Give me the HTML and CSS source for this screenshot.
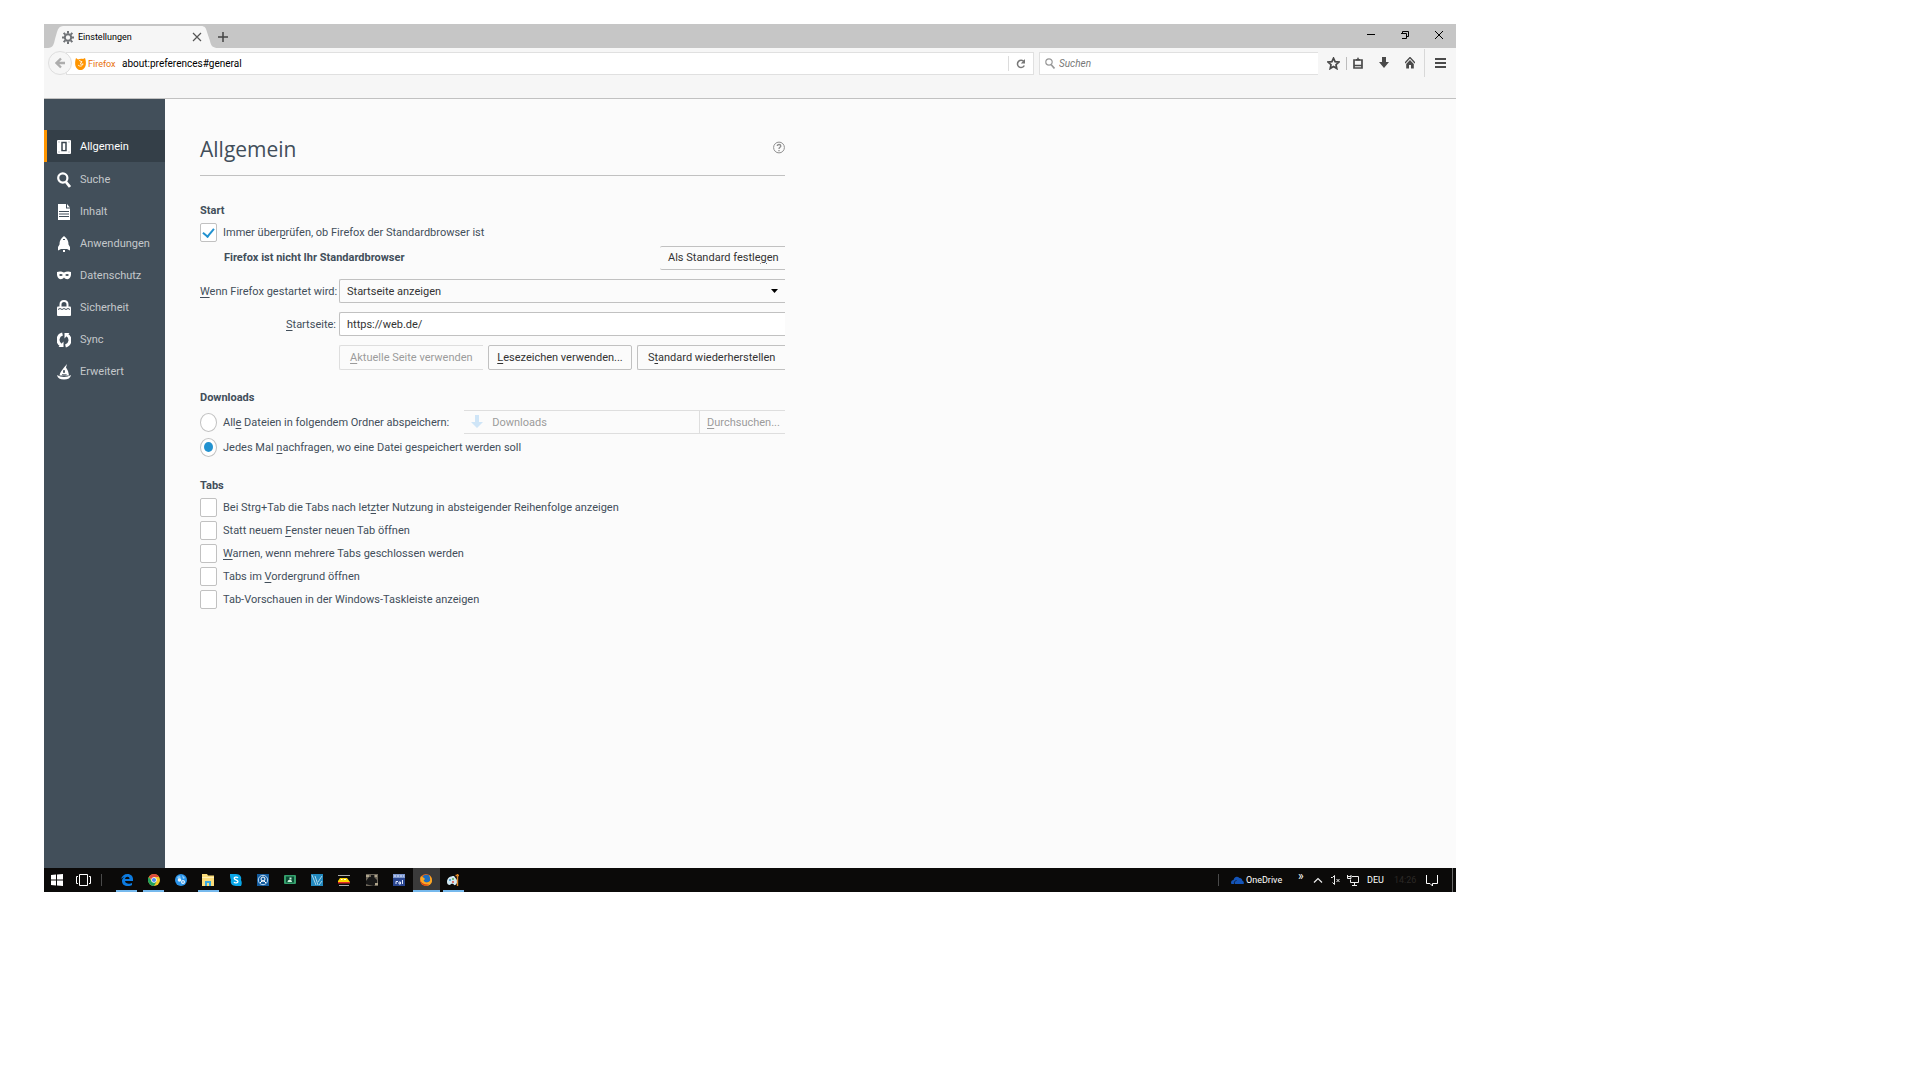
FILE: index.html
```html
<!DOCTYPE html>
<html lang="de">
<head>
<meta charset="utf-8">
<title>Einstellungen</title>
<link rel="stylesheet" href="styles.css">
</head>
<body>
<div class="screen">
  <header class="titlebar">
    <div class="tab">
      <svg class="tab-shape" viewBox="0 0 170 22" preserveAspectRatio="none" aria-hidden="true"><path d="M0 22C5 22 6 18 7 13L9 6C10 2 12 0 15 0H153C157 0 158 2 159 6L162 15C163 20 165 22 170 22Z" fill="#f6f6f6"/></svg>
      <svg class="tab-icon" viewBox="0 0 12 13" aria-hidden="true"><g fill="none" stroke="#6f7276"><circle cx="6" cy="6.500" r="3.200" stroke-width="2"/><path d="M6 0v2.500M6 10.500V13M0 6.500h2M10 6.500h2M1.700 1.900l1.600 1.700M8.700 9.400l1.600 1.700M10.300 1.900L8.700 3.600M3.300 9.400l-1.600 1.700" stroke-width="2"/></g></svg>
      <span class="tab-title">Einstellungen</span>
      <button class="icon-btn" aria-label="Tab schließen"><svg width="10" height="10" viewBox="0 0 10 10"><path d="M1 1l8 8M9 1l-8 8" stroke="#555" stroke-width="1.200"/></svg></button>
    </div>
    <button class="icon-btn" aria-label="Neuer Tab"><svg width="10" height="10" viewBox="0 0 10 10"><path d="M5 0v10M0 5h10" stroke="#444" stroke-width="1.500"/></svg></button>
    <div class="window-controls">
      <button class="icon-btn" aria-label="Minimieren"><svg width="8" height="10" viewBox="0 0 8 10"><path d="M0 4.500h8" stroke="#000"/></svg></button>
      <button class="icon-btn" aria-label="Verkleinern"><svg width="8" height="10" viewBox="0 0 8 10"><path d="M1.500 3V1.500h6v5H6M0 3.500h5.500v5H1" fill="none" stroke="#000"/></svg></button>
      <button class="icon-btn" aria-label="Schließen"><svg width="8" height="10" viewBox="0 0 8 10"><path d="M0 1l8 8M8 1L0 9" stroke="#000"/></svg></button>
    </div>
  </header>

  <div class="navbar">
    <button class="back" aria-label="Zurück"><svg width="10" height="12" viewBox="0 0 10 12"><path d="M10 6H2M6 1.500L1.500 6 6 10.500" fill="none" stroke="#adadad" stroke-width="2.300"/></svg></button>
    <div class="urlbar">
      <svg width="11" height="12" viewBox="0 0 11 12" aria-hidden="true"><path d="M1 0l2 1.500C5 .5 7 .5 8 1l2-1c1 3 1 5 .8 6.500C10.400 10 8 12 5.500 12S.5 10 .2 6.500C0 4 .3 2 1 0z" fill="#ff9500"/><path d="M4 2.500c1 0 1.500 1 3 1.200C6.500 4.800 6 5 5 5.500c1 1 2.300 1 3 .2-.4 2.400-3 3.300-5 1.300" fill="none" stroke="#fff" stroke-width=".9"/></svg>
      <span class="identity">Firefox</span>
      <input class="url-input" type="text" value="about:preferences#general" aria-label="Adresse">
      <button class="reload" aria-label="Neu laden"><svg width="10" height="10" viewBox="0 0 10 10"><path d="M8 2.800A3.600 3.600 0 1 0 8.300 6.500" fill="none" stroke="#777" stroke-width="1.500"/><path d="M9 0v4.500H4.800z" fill="#777"/></svg></button>
    </div>
    <div class="searchbar">
      <svg width="10" height="11" viewBox="0 0 10 11" aria-hidden="true"><circle cx="4" cy="4" r="3.200" fill="none" stroke="#999" stroke-width="1.200"/><path d="M6 6.500l3.500 4" stroke="#999" stroke-width="1.700"/></svg>
      <input class="search-input" type="text" placeholder="Suchen" aria-label="Suchen">
    </div>
    <div class="tools">
      <button class="icon-btn" aria-label="Lesezeichen"><svg width="13" height="13" viewBox="0 0 13 13"><path d="M6.500 1.200l1.600 3.500 3.800.4L9 7.700l.8 3.900-3.300-2-3.300 2 .8-3.900L1.100 5.100l3.800-.4z" fill="none" stroke="#4a4a4a" stroke-width="1.700"/></svg></button>
      <span class="tool-sep"></span>
      <button class="icon-btn" aria-label="Lesezeichenliste"><svg width="10" height="12" viewBox="0 0 10 12"><path d="M1 3h8v8H1zM1 8.500h8" fill="none" stroke="#4a4a4a" stroke-width="1.700"/><path d="M3 2h1l1-2 1 2h1v1.500H3z" fill="#4a4a4a"/></svg></button>
      <button class="icon-btn" aria-label="Downloads"><svg width="10" height="12" viewBox="0 0 10 12"><path d="M3 0h4v5h3L5 11 0 5h3z" fill="#4a4a4a"/></svg></button>
      <button class="icon-btn" aria-label="Startseite"><svg width="10" height="12" viewBox="0 0 10 12"><path d="M0 6l5-5.500L10 6" fill="none" stroke="#4a4a4a" stroke-width="1.300"/><path d="M5 3L1.200 7v4.500H4V8h2v3.500h2.800V7z" fill="#4a4a4a"/></svg></button>
      <button class="icon-btn menu-btn" aria-label="Menü"><svg width="11" height="10" viewBox="0 0 11 10"><path d="M0 1h11M0 5h11M0 9h11" stroke="#4a4a4a" stroke-width="2"/></svg></button>
    </div>
  </div>

  <div class="page">
    <nav class="categories">
      <a class="category selected" href="#general"><svg viewBox="0 0 14 16" aria-hidden="true"><rect y="1" width="14" height="14" rx="1" fill="#fff"/><path d="M5 3.500h4v8H5z" fill="none" stroke="#3b464f" stroke-width="1.500"/><path d="M6 9h2v2H6z" fill="#fff"/><path d="M1.500 2.500h1v1h-1zM11.500 2.500h1v1h-1zM1.500 12.500h1v1h-1zM11.500 12.500h1v1h-1z" fill="#8b949a"/></svg>Allgemein</a>
      <a class="category" href="#search"><svg viewBox="0 0 14 16" aria-hidden="true"><circle cx="5.800" cy="6" r="4.600" fill="none" stroke="#fff" stroke-width="2.200"/><path d="M9 10l4 5" stroke="#fff" stroke-width="2.800"/></svg>Suche</a>
      <a class="category" href="#content"><svg viewBox="0 0 14 16" aria-hidden="true"><path d="M1 0h8v4.500h4V16H1z" fill="#fff"/><path d="M10 0l3 3.500h-3z" fill="#fff"/><path d="M2 7.500h10M2 10h10M2 12.500h10" stroke="#424f5a"/></svg>Inhalt</a>
      <a class="category" href="#applications"><svg viewBox="0 0 14 16" aria-hidden="true"><path d="M7 0c3.500 2.500 4.500 5 4.500 8.500L13 11v3.500l-3-1.500H4l-3 1.500V11l1.500-2.500C2.500 5 3.500 2.500 7 0z" fill="#fff"/><path d="M6 14h2v2H6z" fill="#fff"/><path d="M6 3.500h2" stroke="#424f5a"/></svg>Anwendungen</a>
      <a class="category" href="#privacy"><svg viewBox="0 0 14 16" aria-hidden="true"><path d="M0 4c2-1 5-.8 7 .6C9 3.200 12 3 14 4v3c-1 5-5 5-7 2.500C5 12 1 12 0 7z" fill="#fff"/><path d="M2 7c1-1.500 3-1.300 3.800 0-.8 1.400-2.800 1.500-3.800 0zM8.200 7C9 5.700 11 5.500 12 7c-1 1.500-3 1.400-3.800 0z" fill="#424f5a"/></svg>Datenschutz</a>
      <a class="category" href="#security"><svg viewBox="0 0 14 16" aria-hidden="true"><path d="M3.500 8V4.500C3.500 2.500 5 1 7 1s3.500 1.500 3.500 3.500V8" fill="none" stroke="#fff" stroke-width="2"/><rect x="0" y="6.500" width="14" height="9.500" rx="1" fill="#fff"/><path d="M1 9.500l2-1 2 1 2-1 2 1 2-1 2 1" fill="none" stroke="#424f5a"/></svg>Sicherheit</a>
      <a class="category" href="#sync"><svg viewBox="0 0 14 16" aria-hidden="true"><path d="M5.500 2A6 6 0 0 0 4 13M8.500 14A6 6 0 0 0 10 3" fill="none" stroke="#fff" stroke-width="3"/><path d="M1.500 15h5V9.500zM12.500 1h-5v5.500z" fill="#fff"/></svg>Sync</a>
      <a class="category" href="#advanced"><svg viewBox="0 0 14 16" aria-hidden="true"><path d="M10 0L9 3.500c2 2.500 2.500 5 3 8H2.500c.5-3 2.500-5.500 4.500-8z" fill="#fff"/><path d="M0 11c4 2.500 10 2.500 14 0-.5 3-3 4.500-7 4.500S.5 14 0 11z" fill="#fff"/><path d="M5 10.500c1.500.8 3 .8 4.500 0M6.500 6.500h1v2h-1z" stroke="#424f5a" fill="#424f5a" stroke-width=".8"/></svg>Erweitert</a>
    </nav>

    <main class="content">
      <div class="pane-head">
        <h1>Allgemein</h1>
        <button class="icon-btn" aria-label="Hilfe"><svg width="12" height="13" viewBox="0 0 12 13"><circle cx="6" cy="6.500" r="5.400" fill="none" stroke="#8e8e8e"/><path d="M4.300 5C4.300 3 7.800 3 7.800 5 7.800 6.300 6 6.200 6 8M6 9v1.300" fill="none" stroke="#8e8e8e" stroke-width="1.300"/></svg></button>
      </div>

      <section class="group">
        <h2>Start</h2>
        <label class="option check-default"><input type="checkbox" checked><span>Immer über<u>p</u>rüfen, ob Firefox der Standardbrowser ist</span></label>
        <div class="default-row"><strong>Firefox ist nicht Ihr Standardbrowser</strong><button class="btn open-left">Als Standard festle<u>g</u>en</button></div>
        <div class="form">
          <label for="startup"><u>W</u>enn Firefox gestartet wird:</label>
          <div class="select-wrap">
            <select id="startup"><option>Startseite anzeigen</option></select>
            <svg class="caret" viewBox="0 0 7 4" aria-hidden="true"><path d="M0 0h7L3.500 4z" fill="#000"/></svg>
          </div>
          <label for="home"><u>S</u>tartseite:</label>
          <input class="text" id="home" type="text" value="https://web.de/">
          <div class="home-buttons">
            <button class="btn closed" disabled><u>A</u>ktuelle Seite verwenden</button>
            <button class="btn closed mid"><u>L</u>esezeichen verwenden...</button>
            <button class="btn wide">S<u>t</u>andard wiederherstellen</button>
          </div>
        </div>
      </section>

      <section class="group downloads">
        <h2>Downloads</h2>
        <div class="folder-row">
          <label class="option"><input type="radio" name="dl"><span>All<u>e</u> Dateien in folgendem Ordner abspeichern:</span></label>
          <div class="folder">
            <svg width="12" height="14" viewBox="0 0 12 14" aria-hidden="true"><path d="M4 0h4v7h4l-6 6-6-6h4z" fill="#cfe5f7"/></svg>
            <input type="text" value="Downloads" aria-label="Ordner" disabled>
          </div>
          <button class="btn browse" disabled><u>D</u>urchsuchen...</button>
        </div>
        <label class="option ask"><input type="radio" name="dl" checked><span>Jedes Mal <u>n</u>achfragen, wo eine Datei gespeichert werden soll</span></label>
      </section>

      <section class="group tabs">
        <h2>Tabs</h2>
        <label class="option"><input type="checkbox"><span>Bei Strg+Tab die Tabs nach let<u>z</u>ter Nutzung in absteigender Reihenfolge anzeigen</span></label>
        <label class="option"><input type="checkbox"><span>Statt neuem <u>F</u>enster neuen Tab öffnen</span></label>
        <label class="option"><input type="checkbox"><span><u>W</u>arnen, wenn mehrere Tabs geschlossen werden</span></label>
        <label class="option"><input type="checkbox"><span>Tabs im <u>V</u>ordergrund öffnen</span></label>
        <label class="option"><input type="checkbox"><span>Tab-Vorschauen in der Windows-Taskleiste anzeigen</span></label>
      </section>
    </main>
  </div>

  <footer class="taskbar">
    <button class="icon-btn" aria-label="Start"><svg width="12" height="12" viewBox="0 0 12 12"><path d="M0 1l5-.5v5H0zM6 .4L12 0v5.500H6zM0 6.500h5v5L0 11zM6 6.500h6V12l-6-.4z" fill="#fff"/></svg></button>
    <button class="icon-btn task-view" aria-label="Taskansicht"><svg width="15" height="12" viewBox="0 0 15 12"><path d="M3.500.5h8v11h-8zM2 2.500H.5v7H2M13 2.500h1.500v7H13" fill="none" stroke="#fff"/></svg></button>
    <span class="bar-sep"></span>
    <div class="apps">
      <button class="app running" aria-label="Edge"><svg viewBox="0 0 12 12"><path d="M0 5C1 2 3 0 6.500 0 10 0 12 2.500 12 5v2H4c.2 2 2 2.700 4 2.700 1.300 0 2.300-.3 3-.8V11c-1 .7-2.300 1-4 1-4 0-6-2-6-5 0-2 1-3.300 2.500-4C2.500 3 1 4 0 5zm4 0h4.500c0-1.500-.8-2.300-2-2.300S4.300 3.500 4 5z" fill="#0c7be0"/></svg></button>
      <button class="app running" aria-label="Chrome"><svg viewBox="0 0 12 12"><circle cx="6" cy="6" r="6" fill="#f5c928"/><path d="M.8 3A6 6 0 0 1 11.200 3H6L4 6z" fill="#dd4b3e"/><path d="M.8 3A6 6 0 0 0 6 12l2.500-4.500L4 7.500z" fill="#1fa15d"/><circle cx="6" cy="6" r="2.700" fill="#fff"/><circle cx="6" cy="6" r="2.100" fill="#4a8af4"/></svg></button>
      <button class="app" aria-label="Browser"><svg viewBox="0 0 12 12"><circle cx="6" cy="6" r="6" fill="#2a94ea"/><path d="M2 3l3-1.500 1 3L3 5z" fill="#7cc5fa"/><circle cx="4.500" cy="6" r="1.800" fill="#e8f5ff"/><circle cx="8" cy="8" r="2" fill="#e8f5ff"/><circle cx="8" cy="8" r=".8" fill="#1d78cc"/><path d="M7 1l3 3-2 1z" fill="#8fd0ff"/></svg></button>
      <button class="app running" aria-label="Explorer"><svg viewBox="0 0 12 12"><path d="M0 0h5l1 1.500h6V12H0z" fill="#fbdc7a"/><path d="M0 3h12v1H0z" fill="#fff0b8"/><path d="M3 12V7h6v5H7V9H5v3z" fill="#37a8e0"/></svg></button>
      <button class="app" aria-label="Skype"><svg viewBox="0 0 12 12"><path d="M0 0h6c4 0 6 3 5 6 1 2 1 4 0 6H6C2 12 0 9 1 6 0 4 0 2 0 0z" fill="#08a5e6"/><path d="M8 4C7 2.500 4 3 4.300 4.500 4.600 6 8 5.800 8 7.700 7.800 9.300 4.700 9.300 4 8" fill="none" stroke="#fff" stroke-width="1.300"/></svg></button>
      <button class="app" aria-label="TeamViewer"><svg viewBox="0 0 12 12"><path d="M0 0h12v12H0z" fill="#125a9c"/><circle cx="6" cy="6" r="4.700" fill="none" stroke="#b9d8f2"/><circle cx="6" cy="5" r="2" fill="none" stroke="#fff"/><path d="M3 9l2-2h2l2 2" fill="none" stroke="#fff"/></svg></button>
      <button class="app" aria-label="Lernprogramm"><svg viewBox="0 0 12 12"><rect y="1" width="12" height="9" rx="1" fill="#35a06c"/><path d="M2 2.500h8v6H2z" fill="#0b4b33"/><path d="M3.500 8c0-3 4.500-3 4.500 0M5.500 3.500h2v2h-2z" fill="#cdf3dd"/></svg></button>
      <button class="app" aria-label="Editor"><svg viewBox="0 0 12 12"><path d="M0 0h12v12H0z" fill="#2289bf"/><path d="M1 1l4 10M4 2l3 9M7 8l4-6M8 11l3-4" stroke="#b8ddee" stroke-width=".9"/></svg></button>
      <button class="app" aria-label="Bahn"><svg viewBox="0 0 12 12"><path d="M0 1.500h12M1 11.500h10" stroke="#aaa"/><path d="M0 7l2-3h7l3 4H0z" fill="#ffd800"/><path d="M0 8h12v1.500H0z" fill="#e22b28"/><path d="M3 5h1.500v1H3zM6 5h2v1H6z" fill="#fff"/></svg></button>
      <button class="app" aria-label="Lokomotive"><svg viewBox="0 0 12 12"><path d="M0 0h12v12H0z" fill="#6f685c"/><path d="M0 7l3-4h2V1h3v2l3 3v3l-3 3-5-1-3-1z" fill="#181818"/><path d="M0 1h3v2H0zM9 9h3v2H9zM9 1h2v2H9z" fill="#b0a58c"/></svg></button>
      <button class="app" aria-label="Rail"><svg viewBox="0 0 12 12"><path d="M0 0h12v12H0z" fill="#29458f"/><path d="M0 0h12v4H0z" fill="#7e98cf"/><path d="M1 2h10" stroke="#dde6fa" stroke-dasharray="2 1"/><path d="M3 10V7.500h2M6 8h1.500v2H6zM9.500 6v4" fill="none" stroke="#dfe8ff"/></svg></button>
      <button class="app running active" aria-label="Firefox"><svg viewBox="0 0 12 12"><circle cx="6" cy="6" r="6" fill="#e86a17"/><circle cx="6.500" cy="4.700" r="4" fill="#1d6fc0"/><path d="M1 2c1 1 3 1.500 4 3L3.500 6.500C5 9 8 9 10 7c.5-2 0-4-1-6 4 3 4 8 0 10.200C4 13-2 8 1 2z" fill="#f9a825"/><path d="M0 5c1 4 4 6 9 5.500-2 2-8 2-9-5.500z" fill="#d63a15"/></svg></button>
      <button class="app running" aria-label="Paint"><svg viewBox="0 0 12 12"><path d="M0 8C0 4 3 2 7 2l3 4c1 2-1 6-3 5-1-2-3-1-4 0-2 0-3-1-3-3z" fill="#d3e9f2"/><circle cx="3" cy="6" r="1" fill="#3a93d0"/><circle cx="6" cy="5" r="1" fill="#58ad54"/><circle cx="6" cy="8" r="1" fill="#d94c43"/><path d="M10.500 0v12M8.500 1.500h3.500" stroke="#dc8527" stroke-width="1.400"/></svg></button>
    </div>
    <div class="tray">
      <span class="bar-sep"></span>
      <svg width="13" height="8" viewBox="0 0 13 8" aria-hidden="true"><path d="M0 7c0-2 1-3 2.500-3C3 1 6-.5 8.500 2 11 2 11.500 4 11.300 4.800 13 5 13.500 8 12 8H1C.5 8 0 7.500 0 7z" fill="#1454b8"/><path d="M3.500 8c-.5-2 .5-3.500 2-3.500" fill="none" stroke="#0e1422" stroke-width=".8"/></svg>
      <span class="onedrive">OneDrive</span>
      <span class="more">»</span>
      <svg class="t-up" width="10" height="6" viewBox="0 0 10 6" aria-hidden="true"><path d="M1 5.500l4-4 4 4" fill="none" stroke="#eee" stroke-width="1.200"/></svg>
      <svg class="t-vol" width="9" height="10" viewBox="0 0 9 10" aria-hidden="true"><path d="M0 2.500h1.500L3.500.5v9L1.500 7.500M5.500 4l3 3M8.500 4l-3 3" fill="none" stroke="#eee"/></svg>
      <svg class="t-net" width="12" height="12" viewBox="0 0 12 12" aria-hidden="true"><path d="M5 2.500h6.500v6h-8V5.500M7.500 8.500v3M5 11.500h5M.5 1v3.500h3.500V1M.5 2.500h3.500" fill="none" stroke="#eee"/></svg>
      <span class="lang">DEU</span>
      <span class="clock">14:26</span>
      <svg class="t-note" width="12" height="13" viewBox="0 0 12 13" aria-hidden="true"><path d="M.5 1v8.500H4L6.500 12V9.500h5V1" fill="none" stroke="#fff"/></svg>
      <span class="bar-sep end"></span>
    </div>
  </footer>
</div>
</body>
</html>
```
FILE: styles.css
```css
* { box-sizing: border-box; }

body {
  margin: 0;
  min-height: 100vh;
  padding: 24px 464px 188px 44px;
  display: flex;
  background: #fff;
  color: #424e5a;
  font: 11px/16px Roboto, "Open Sans", sans-serif;
}

button, input, select { font: inherit; color: inherit; margin: 0; }
svg { display: block; flex: none; }
u { text-decoration: underline; text-underline-offset: 2px; }

.screen { flex: 1; display: flex; flex-direction: column; min-width: 0; }

.icon-btn {
  padding: 0;
  border: 0;
  background: none;
  display: flex;
  align-items: center;
  justify-content: center;
}

/* Title bar */
.titlebar {
  height: 24px;
  padding: 2px 13px 0 4px;
  display: flex;
  align-items: center;
  background: #c6c6c6;
}
.tab {
  position: relative;
  width: 170px;
  height: 22px;
  padding: 0 16px 0 14px;
  display: flex;
  align-items: center;
  gap: 4px;
}
.tab-shape { position: absolute; inset: 0; width: 100%; height: 100%; }
.tab-icon { position: relative; width: 12px; height: 13px; }
.tab-title { position: relative; flex: 1; color: #000; font-size: 9px; }
.tab .icon-btn { position: relative; }
.window-controls { margin-left: auto; padding-bottom: 4px; display: flex; gap: 26px; }

/* Navigation bar */
.navbar {
  height: 51px;
  padding: 3px 10px 0 4px;
  display: flex;
  align-items: flex-start;
  background: #f6f6f6;
  border-bottom: 1px solid #c1c1c1;
}
.back {
  position: relative;
  width: 24px;
  height: 24px;
  padding: 0;
  border: 1px solid #dedede;
  border-radius: 50%;
  background: #f6f6f6;
  display: flex;
  align-items: center;
  justify-content: center;
}
.urlbar, .searchbar {
  height: 23px;
  margin-top: 1px;
  display: flex;
  align-items: center;
  background: #fff;
  border: 1px solid #e0e0e0;
}
.urlbar { flex: 1; margin-left: -6px; padding-left: 8px; }
.identity { margin-left: 2px; width: 34px; color: #e8710a; font-size: 9px; }
.url-input, .search-input {
  flex: 1;
  min-width: 0;
  padding: 1px 0 0;
  border: 0;
  background: none;
  color: #000;
  font-size: 10px;
}
.reload {
  width: 25px;
  height: 15px;
  padding: 0 0 0 7px;
  border: 0;
  border-left: 1px solid #dcdcdc;
  background: none;
}
.searchbar { width: 279px; margin-left: 5px; padding-left: 5px; border-right: 0; gap: 4px; }
.search-input::placeholder { color: #777; font-style: italic; opacity: 1; }
.tools { height: 24px; padding-left: 9px; display: flex; align-items: center; gap: 16px; }
.tool-sep { width: 1px; height: 13px; margin: 0 -10px; background: #bdbdbd; }
.menu-btn { height: 28px; margin-left: -7px; padding-left: 10px; border-left: 1px solid #d8d8d8; }

/* Preferences page */
.page { flex: 1; display: flex; background: #fbfbfb; }
.categories { width: 121px; padding-top: 31px; background: #424f5a; }
.category {
  height: 32px;
  padding: 1px 0 0 13px;
  display: flex;
  align-items: center;
  gap: 9px;
  color: #c4c8cb;
  text-decoration: none;
}
.category svg { width: 14px; height: 16px; }
.category.selected {
  margin-bottom: 1px;
  padding-left: 10px;
  border-left: 3px solid #ff9500;
  background: #343f48;
  color: #fff;
}

.content { width: 620px; padding: 26px 0 0 35px; }
.pane-head {
  height: 51px;
  padding-bottom: 2px;
  display: flex;
  justify-content: space-between;
  align-items: center;
  border-bottom: 1px solid #c1c1c1;
}
.pane-head .icon-btn { margin-bottom: 4px; }
h1 { margin: 0; font: 21px/32px "Open Sans", sans-serif; }
h2 { margin: 0; padding-top: 2px; font-size: 11px; line-height: 18px; font-weight: 700; }
strong { font-weight: 700; }
.group { padding-top: 24px; }
.downloads { padding-top: 17px; }
.tabs { padding-top: 16px; }
.tabs h2 { padding: 1px 0; }

.option { height: 23px; display: flex; align-items: center; gap: 6px; }
.tabs .option span, .downloads .option span { padding-top: 1px; }
.option input {
  appearance: none;
  flex: none;
  width: 17px;
  height: 19px;
  border: 1px solid #c1c1c1;
  border-radius: 2px;
  background: #fff;
  display: flex;
  align-items: center;
  justify-content: center;
}
.option input[type="radio"] { border-radius: 50%; }
.option input[type="checkbox"]:checked::after {
  content: "";
  width: 5px;
  height: 9px;
  margin-bottom: 3px;
  border: solid #2292d0;
  border-width: 0 2px 2px 0;
  transform: rotate(40deg);
}
.option input[type="radio"]:checked::after {
  content: "";
  width: 9px;
  height: 10px;
  border-radius: 50%;
  background: #2292d0;
}
.option.check-default { height: 25px; }
.option.ask { height: 26px; }

.default-row {
  height: 25px;
  padding-left: 24px;
  display: flex;
  justify-content: space-between;
  align-items: center;
}
.btn {
  height: 24px;
  padding: 0 8px;
  border: 1px solid #c1c1c1;
  border-right: 0;
  border-radius: 2px 0 0 2px;
  background: #fbfbfb;
  color: #333;
  white-space: nowrap;
}
.btn:disabled { color: #9b9b9b; border-color: #dedede; }
.open-left { width: 125px; border-left: 0; }

.form {
  padding-top: 9px;
  display: grid;
  grid-template-columns: 136px 1fr;
  gap: 9px 3px;
  align-items: center;
}
.form label { padding-top: 2px; text-align: right; white-space: nowrap; }
.select-wrap { position: relative; }
select, .text {
  appearance: none;
  display: block;
  width: 100%;
  height: 24px;
  padding: 1px 7px 0;
  border: 1px solid #c1c1c1;
  border-right: 0;
  border-radius: 2px 0 0 2px;
  background: #fbfbfb;
  color: #333;
}
.text { background: #fff; }
.caret { position: absolute; right: 7px; top: 10px; width: 7px; height: 4px; }
.home-buttons { grid-column: 2; display: flex; gap: 5px; }
.home-buttons .btn { height: 25px; flex: 144; padding: 1px 0 0; }
.home-buttons .mid { border-right: 1px solid #c1c1c1; border-radius: 2px; }
.home-buttons .wide { flex: 148; }

.folder-row { margin-top: 3px; height: 24px; display: flex; align-items: center; }
.folder {
  flex: 1;
  height: 24px;
  margin-left: 15px;
  padding-left: 7px;
  display: flex;
  align-items: center;
  gap: 9px;
  border: solid #dedede;
  border-width: 1px 0;
}
.folder input { width: 100%; min-width: 0; padding: 1px 0 0; border: 0; background: none; color: #9b9b9b; }
.browse { width: 86px; border-radius: 0; padding: 1px 7px 0; text-align: left; }

/* Taskbar */
.taskbar {
  height: 24px;
  padding-left: 7px;
  display: flex;
  align-items: center;
  background: #0b0a09;
  color: #fff;
}
.task-view { margin: 0 10px 0 13px; }
.bar-sep { width: 1px; height: 12px; background: #4a4a4a; }
.apps { width: 354px; height: 24px; margin-left: 11px; display: flex; }
.app {
  position: relative;
  flex: 1;
  padding: 0;
  border: 0;
  background: none;
  display: flex;
  align-items: center;
  justify-content: center;
}
.app svg { width: 12px; height: 12px; }
.app.running::after {
  content: "";
  position: absolute;
  left: 3px;
  right: 3px;
  bottom: 0;
  height: 2px;
  background: #76b9ed;
}
.app.active { background: #3a3a3a; }
.app.active::after { left: 0; right: 0; }
.tray { margin-left: auto; display: flex; align-items: center; font-size: 9px; }
.tray > .bar-sep { margin-right: 12px; }
.onedrive { width: 54px; padding-left: 2px; }
.more { width: 15px; margin-top: -8px; font-size: 12px; }
.t-vol { margin-left: 8px; }
.t-net { margin-left: 7px; }
.lang { width: 35px; padding-left: 8px; }
.clock { width: 24px; color: #2b2926; }
.t-note { margin-left: 8px; }
.tray > .end { height: 24px; margin: 0 3px 0 14px; background: #6b6b6b; }
```
